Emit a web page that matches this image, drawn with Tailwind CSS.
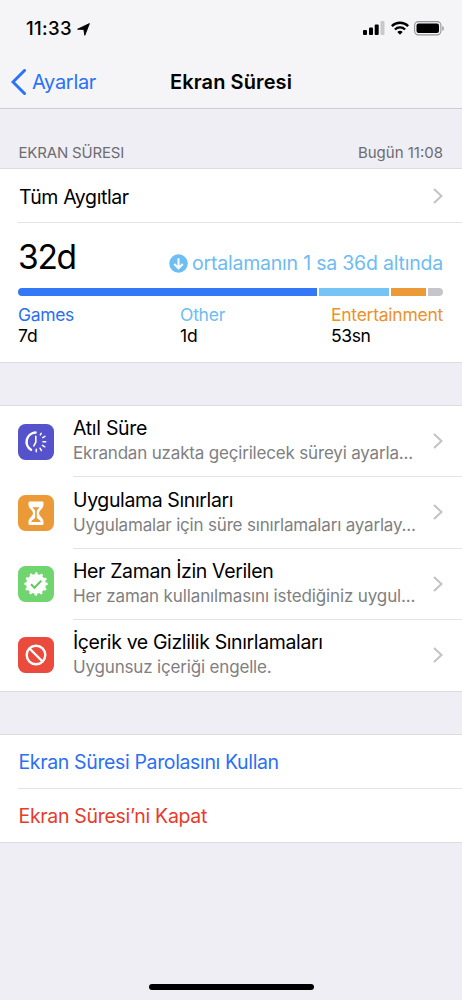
<!DOCTYPE html>
<html lang="tr">
<head>
<meta charset="utf-8">
<title>Ekran Süresi</title>
<script src="https://cdn.jsdelivr.net/npm/@tailwindcss/browser@4"></script>
</head>
<body class="w-[462px] h-[1000px] overflow-hidden bg-[#efeef4] font-['Inter',sans-serif] text-black flex flex-col">
<svg class="hidden"><symbol id="chev" viewBox="0 0 10 16"><path d="M1 1l7.500 7L1 15" fill="none" stroke="#c2c2c7" stroke-width="2"/></symbol></svg>
<header class="h-[109px] shrink-0 bg-[#f5f5f7] border-b border-[#cfced4] flex flex-col">
  <div class="h-[56px] flex items-center pl-[26px] pr-[17px]">
    <span class="text-[18.5px] leading-6 font-medium whitespace-nowrap tracking-[0.37px]">11:33</span>
    <svg class="ml-[5px] mt-[2px] w-[13px] h-[13px]" viewBox="0 0 13 13"><path d="M12.400.6L7.800 12.300 6.800 6.400.6 6.200z" stroke="#000" stroke-width=".9" stroke-linejoin="round"/></svg>
    <svg class="ml-auto w-[22px] h-[14px]" viewBox="0 0 22 14"><rect x="0" y="9" width="4" height="5" rx="1"/><rect x="6" y="6.500" width="4" height="7.500" rx="1"/><rect x="11.700" y="3.500" width="4" height="10.500" rx="1"/><rect x="17.500" y="0" width="4" height="14" rx="1" fill="#c8c8ca"/></svg>
    <svg class="ml-[6px] w-[18px] h-[14px]" viewBox="0 0 18 14"><g fill="none" stroke="#000" stroke-width="2.400"><path d="M.8 5.100a11.600 11.600 0 0 1 16.400 0"/><path d="M3.900 8.500a7.200 7.200 0 0 1 10.200 0"/></g><path d="M6.300 11a3.900 3.900 0 0 1 5.400 0L9 13.700z"/></svg>
    <svg class="ml-[5px] w-[31px] h-[15px]" viewBox="0 0 31 15"><rect x=".6" y=".6" width="26.300" height="13.300" rx="3.800" fill="none" stroke="#949496" stroke-width="1.100"/><rect x="2.500" y="2.500" width="22.500" height="9.500" rx="2"/><path d="M28.300 5c2 .7 2 4.200 0 5z" fill="#949496"/></svg>
  </div>
  <div class="h-[52px] grid grid-cols-[170px_1fr] items-center">
    <div class="flex items-center pl-[11px] text-[#2a72f8]">
      <svg class="w-[15px] h-[26px]" viewBox="0 0 15 26"><path d="M13.500 1.500L2 13l11.500 11.500" fill="none" stroke="currentColor" stroke-width="3" stroke-linecap="round"/></svg>
      <span class="ml-[6px] text-[20px] leading-6 whitespace-nowrap tracking-[-0.32px]">Ayarlar</span>
    </div>
    <h1 class="leading-6 text-[20px] font-semibold whitespace-nowrap tracking-[0.1px]">Ekran Süresi</h1>
  </div>
</header>
<div class="h-[59px] shrink-0 flex items-center justify-between pl-[18px] pr-[19px] pt-[29px] pb-[1px] text-[#6d6d72] text-[15px] leading-none whitespace-nowrap"><span class="tracking-[-0.18px] pl-[0.5px]">EKRAN SÜRESI</span><span>Bugün 11:08</span></div>
<section class="h-[195px] shrink-0 bg-white border-y border-[#dcdbe0] flex flex-col">
  <div class="ml-[18px] pr-[19px] h-[54px] flex items-center justify-between border-b border-[#e3e3e5]"><span class="pt-[4px] pl-[1px] text-[19.5px] whitespace-nowrap tracking-[-0.39px]">Tüm Aygıtlar</span><svg class="w-[10px] h-[16px]"><use href="#chev"/></svg></div>
  <div class="h-[65px] pl-[18px] pr-[19px] flex justify-between">
    <span class="mt-[12px] text-[33.5px] leading-[44px] whitespace-nowrap tracking-[-1.3px]">32d</span>
    <div class="mt-[28px] h-6 flex items-center text-[#6dbcf2]"><svg class="w-[19px] h-[19px] mr-[4px]" viewBox="0 0 19 19"><circle cx="9.500" cy="9.500" r="9.300" fill="#6dbff3"/><path d="M9.500 4.200v10M5.200 10l4.300 4.300L13.800 10" fill="none" stroke="#fff" stroke-width="2"/></svg><span class="pt-[2px] text-[19.5px] whitespace-nowrap tracking-[-0.21px]">ortalamanın 1 sa 36d altında</span></div>
  </div>
  <div class="ml-[18px] mr-[19px] h-[8px] flex gap-[2px] rounded-full overflow-hidden"><i class="w-[299px] bg-[#3378f6]"></i><i class="w-[70px] bg-[#76c3f5]"></i><i class="w-[35px] bg-[#ec9a38]"></i><i class="flex-1 bg-[#c6c5cb]"></i></div>
  <div class="pl-[18px] pt-[8px] grid grid-cols-[162px_151px_1fr] text-[17.5px] leading-[20px]">
    <div class="flex flex-col items-start"><span class="text-[#2a6ff5] leading-[22px] tracking-[-0.33px]">Games</span><span class="tracking-[-0.12px]">7d</span></div>
    <div class="flex flex-col items-start"><span class="text-[#6dbcf2] leading-[22px] tracking-[-0.25px]">Other</span><span>1d</span></div>
    <div class="flex flex-col items-start"><span class="text-[#ea922c] leading-[22px] tracking-[-0.25px]">Entertainment</span><span class="tracking-[-0.4px]">53sn</span></div>
  </div>
</section>
<section class="mt-[42px] h-[287px] shrink-0 bg-white border-y border-[#dcdbe0] grid grid-rows-4">
  <div class="flex items-center pl-[18px]">
    <svg class="w-[36px] h-[36px] shrink-0" viewBox="0 0 36 36"><rect width="36" height="36" rx="7.500" fill="#5552cb"/><g fill="none" stroke="#fff" stroke-linecap="round"><path d="M17.500 8.600a9.300 9.300 0 0 0-4.500 17.200" stroke-width="2.500"/><path d="M17.800 12.200v6l-2 3.600" stroke-width="1.600"/><path d="M22.300 10.900l.9-1.600M24.700 13.600l2.200-1.300M25 17.800h2.700M24.400 21.400l2.400 1.400M22 24.200l1.400 2.400M18.300 25.200v2.500" stroke-width="1.500"/></g></svg>
    <div class="ml-[19px] flex-1 h-full flex items-center border-b border-[#e3e3e5] pr-[19px]"><div class="flex flex-col items-start"><span class="text-[19.5px] leading-[25px] whitespace-nowrap tracking-[-0.3px]">Atıl Süre</span><span class="text-[17px] leading-[25px] text-[#808083] whitespace-nowrap tracking-[-0.18px]">Ekrandan uzakta geçirilecek süreyi ayarla...</span></div><svg class="ml-auto w-[10px] h-[16px] shrink-0"><use href="#chev"/></svg></div>
  </div>
  <div class="flex items-center pl-[18px]">
    <svg class="w-[36px] h-[36px] shrink-0" viewBox="0 0 36 36"><rect width="36" height="36" rx="7.500" fill="#ec9a38"/><path d="M11.500 6.500h13a1 1 0 0 1 1 1v2c0 4.500-4.500 5.500-4.500 8.700s4.500 4.300 4.500 8.800v2a1 1 0 0 1-1 1h-13a1 1 0 0 1-1-1v-2c0-4.500 4.500-5.600 4.500-8.800s-4.500-4.200-4.500-8.700v-2a1 1 0 0 1 1-1z" fill="#fff"/><path d="M14.500 12.300h7c-.8 1.500-2.600 2-2.700 4v6c.3 2 3.500 2.500 4 4.700h-9.600c.5-2.200 3.700-2.700 4-4.700v-6c-.1-2-1.900-2.500-2.700-4z" fill="#ec9a38"/></svg>
    <div class="ml-[19px] flex-1 h-full flex items-center border-b border-[#e3e3e5] pr-[19px]"><div class="flex flex-col items-start"><span class="text-[19.5px] leading-[26px] whitespace-nowrap tracking-[-0.38px]">Uygulama Sınırları</span><span class="text-[17px] leading-[25px] text-[#808083] whitespace-nowrap tracking-[-0.18px]">Uygulamalar için süre sınırlamaları ayarlay...</span></div><svg class="ml-auto w-[10px] h-[16px] shrink-0"><use href="#chev"/></svg></div>
  </div>
  <div class="flex items-center pl-[18px]">
    <svg class="w-[36px] h-[36px] shrink-0" viewBox="0 0 36 36"><rect width="36" height="36" rx="7.500" fill="#70d56f"/><circle cx="18" cy="18" r="10" fill="#fff"/><circle cx="18" cy="18" r="10.400" fill="none" stroke="#fff" stroke-width="2.800" stroke-linecap="round" stroke-dasharray="0 5.445"/><path d="M13 18.300l3.500 3.500 6.700-7" fill="none" stroke="#63c963" stroke-width="2"/></svg>
    <div class="ml-[19px] flex-1 h-full flex items-center border-b border-[#e3e3e5] pr-[19px]"><div class="flex flex-col items-start"><span class="text-[19.5px] leading-[26px] whitespace-nowrap tracking-[-0.37px]">Her Zaman İzin Verilen</span><span class="text-[17px] leading-[25px] text-[#808083] whitespace-nowrap tracking-[-0.13px]">Her zaman kullanılmasını istediğiniz uygul...</span></div><svg class="ml-auto w-[10px] h-[16px] shrink-0"><use href="#chev"/></svg></div>
  </div>
  <div class="flex items-center pl-[18px]">
    <svg class="w-[36px] h-[36px] shrink-0" viewBox="0 0 36 36"><rect width="36" height="36" rx="7.500" fill="#ea4b3c"/><g fill="none" stroke="#fff" stroke-width="2.400"><circle cx="18" cy="18" r="9.300"/><path d="M11.500 11.500l13 13"/></g></svg>
    <div class="ml-[19px] flex-1 h-full flex items-center pr-[19px]"><div class="flex flex-col items-start"><span class="text-[19.5px] leading-[25px] whitespace-nowrap tracking-[-0.38px]">İçerik ve Gizlilik Sınırlamaları</span><span class="text-[17px] leading-[25px] text-[#808083] whitespace-nowrap tracking-[-0.17px]">Uygunsuz içeriği engelle.</span></div><svg class="ml-auto w-[10px] h-[16px] shrink-0"><use href="#chev"/></svg></div>
  </div>
</section>
<section class="mt-[42px] h-[109px] shrink-0 bg-white border-y border-[#dcdbe0] pl-[18px] text-[19.5px] whitespace-nowrap">
  <div class="h-[54px] pt-[3px] flex items-center border-b border-[#e3e3e5] text-[#2a6ff5]"><span class="pl-[0.5px] tracking-[-0.36px]">Ekran Süresi Parolasını Kullan</span></div>
  <div class="h-[53px] pt-[2px] flex items-center text-[#e93a2b]"><span class="pl-[0.5px] tracking-[-0.31px]">Ekran Süresi’ni Kapat</span></div>
</section>
<div class="mt-auto mb-[10px] mx-auto w-[165px] h-[6px] rounded-full bg-black shrink-0"></div>
</body>
</html>
